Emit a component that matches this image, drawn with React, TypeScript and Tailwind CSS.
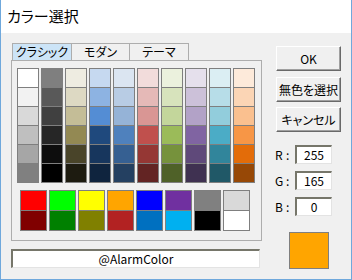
import React from "react";

const columns = [
  ["#ffffff", "#f2f2f2", "#d9d9d9", "#bfbfbf", "#a6a6a6", "#808080"],
  ["#7f7f7f", "#595959", "#404040", "#262626", "#0d0d0d", "#000000"],
  ["#eeece1", "#ddd9c3", "#c4bd97", "#938953", "#494429", "#1d1b10"],
  ["#c6d9f0", "#8db3e2", "#548dd4", "#1f497d", "#17365d", "#0f243e"],
  ["#dbe5f1", "#b8cce4", "#95b3d7", "#4f81bd", "#366092", "#244061"],
  ["#f2dcdb", "#e5b9b7", "#d99694", "#c0504d", "#953734", "#632423"],
  ["#ebf1dd", "#d7e3bc", "#c3d69b", "#9bbb59", "#76923c", "#4f6128"],
  ["#e5e0ec", "#ccc1d9", "#b2a2c7", "#8064a2", "#5f497a", "#3f3151"],
  ["#dbeef3", "#b7dde8", "#92cddc", "#4bacc6", "#31859b", "#205867"],
  ["#fdeada", "#fbd5b5", "#fac08f", "#f79646", "#e36c09", "#974806"],
];

const basics = [
  ["#ff0000", "#800000"],
  ["#00ff00", "#008000"],
  ["#ffff00", "#808000"],
  ["#ffa500", "#b22222"],
  ["#0000ff", "#0070c0"],
  ["#7030a0", "#00b0f0"],
  ["#808080", "#000000"],
  ["#d9d9d9", "#ffffff"],
];

const Button = ({ label, className = "" }: { label: string; className?: string }) => (
  <div
    className={
      "w-[65px] h-[25px] flex items-center justify-center bg-[#f0f0f0] border-t border-l border-white border-r border-b border-r-[#696969] border-b-[#696969] shadow-[inset_-1px_-1px_0_#a0a0a0] text-[12px] text-black " +
      className
    }
  >
    {label}
  </div>
);

const Field = ({ value, className = "" }: { value: string; className?: string }) => (
  <div
    className={
      "h-[19px] bg-white border-t-2 border-l-2 border-t-[#76766a] border-l-[#76766a] border-r border-b border-r-[#e3e3e3] border-b-[#e3e3e3] flex items-center justify-center text-[12px] text-black " +
      className
    }
  >
    {value}
  </div>
);

export default function App() {
  return (
    <div className="w-[352px] h-[280px] bg-[#f0f0f0] border-x border-b border-[#6fa8dc] flex flex-col font-['Noto_Sans_CJK_JP',sans-serif] [font-feature-settings:'palt'] overflow-hidden">
      <div className="h-[33px] bg-white flex items-center pl-[6px] text-[15px] text-black">
        カラー選択
      </div>
      <div className="flex flex-1">
        {/* left */}
        <div className="ml-[10px] pt-[10px] flex flex-col">
          <div className="flex h-[17px] ml-[1px] text-[12px] leading-none text-black">
            <div className="w-[59px] border-t border-l border-[#adadad] bg-[#cce4f7] flex items-center justify-center">
              クラシック
            </div>
            <div className="w-[58px] border-t border-l border-[#adadad] flex items-center justify-center">
              モダン
            </div>
            <div className="w-[60px] border-t border-x border-[#adadad] flex items-center justify-center">
              テーマ
            </div>
          </div>
          <div className="w-[251px] h-[181px] border border-[#adadad] pt-[7px] pl-[5px]">
            <div className="flex gap-[2px]">
              {columns.map((col, i) => (
                <div key={i} className="w-[22px] flex flex-col gap-px border border-[#7f7f7f] bg-[#7f7f7f]">
                  {col.map((c, j) => (
                    <div key={j} className="h-[18px]" style={{ backgroundColor: c }} />
                  ))}
                </div>
              ))}
            </div>
            <div className="mt-[7px] ml-[3px] w-[230px] grid grid-cols-8 gap-[2px]">
              {basics.map((b, i) => (
                <div key={i} className="flex flex-col gap-px border border-[#7f7f7f] bg-[#7f7f7f]">
                  {b.map((c, j) => (
                    <div key={j} className="h-[19px]" style={{ backgroundColor: c }} />
                  ))}
                </div>
              ))}
            </div>
          </div>
          <Field value="@AlarmColor" className="mt-[8px] w-[249px]" />
        </div>
        {/* right */}
        <div className="ml-[14px] pt-[13px] flex flex-col">
          <Button label="OK" />
          <Button label="無色を選択" className="mt-[6px]" />
          <Button label="キャンセル" className="mt-[5px]" />
          <div className="mt-[13px] flex flex-col gap-[7px] text-[12px] text-black">
            {[
              ["R", "255"],
              ["G", "165"],
              ["B", "0"],
            ].map(([l, v]) => (
              <div key={l} className="flex items-center">
                <span className="w-[20px] -ml-px flex">
                  <span className="w-[11px]">{l}</span>
                  <span>:</span>
                </span>
                <Field value={v} className="w-[37px]" />
              </div>
            ))}
          </div>
          <div className="mt-[16px] ml-[13px] w-[40px] h-[37px] bg-[#ffa500] border border-[#7f7f7f]" />
        </div>
      </div>
    </div>
  );
}
